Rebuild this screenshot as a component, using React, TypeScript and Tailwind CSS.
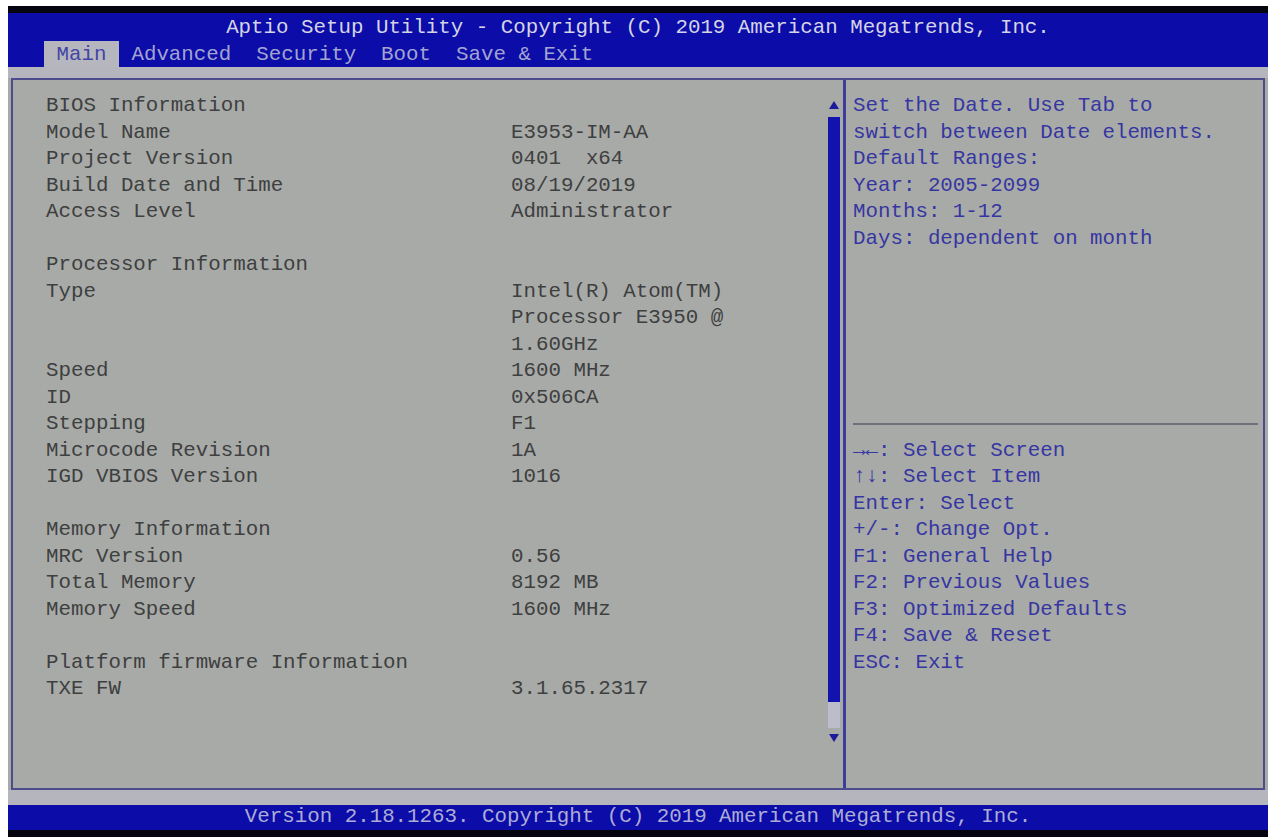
import React from "react";

type Row = { label?: string; value?: string; heading?: boolean };

const mainRows: Row[] = [
    { label: "BIOS Information", heading: true },
    { label: "Model Name", value: "E3953-IM-AA" },
    { label: "Project Version", value: "0401  x64" },
    { label: "Build Date and Time", value: "08/19/2019" },
    { label: "Access Level", value: "Administrator" },
    {},
    { label: "Processor Information", heading: true },
    { label: "Type", value: "Intel(R) Atom(TM)" },
    { value: "Processor E3950 @" },
    { value: "1.60GHz" },
    { label: "Speed", value: "1600 MHz" },
    { label: "ID", value: "0x506CA" },
    { label: "Stepping", value: "F1" },
    { label: "Microcode Revision", value: "1A" },
    { label: "IGD VBIOS Version", value: "1016" },
    {},
    { label: "Memory Information", heading: true },
    { label: "MRC Version", value: "0.56" },
    { label: "Total Memory", value: "8192 MB" },
    { label: "Memory Speed", value: "1600 MHz" },
    {},
    { label: "Platform firmware Information", heading: true },
    { label: "TXE FW", value: "3.1.65.2317" },
];

const helpLines = [
    "Set the Date. Use Tab to",
    "switch between Date elements.",
    "Default Ranges:",
    "Year: 2005-2099",
    "Months: 1-12",
    "Days: dependent on month",
];

const keyLines = [
    "→←: Select Screen",
    "↑↓: Select Item",
    "Enter: Select",
    "+/-: Change Opt.",
    "F1: General Help",
    "F2: Previous Values",
    "F3: Optimized Defaults",
    "F4: Save & Reset",
    "ESC: Exit",
];

const tabs = ["Main", "Advanced", "Security", "Boot", "Save & Exit"];

const TriangleUp = () => (
    <svg width="10" height="8" viewBox="0 0 10 8">
        <path d="M5 0L10 8H0Z" fill="#1a1a9a"/>
    </svg>
);

const TriangleDown = () => (
    <svg width="10" height="8" viewBox="0 0 10 8">
        <path d="M0 0H10L5 8Z" fill="#1a1a9a"/>
    </svg>
);

const App: React.FC = () => {
    return (
        <div className="w-[1268px] h-[837px] bg-white pt-[6px] pl-[8px] flex font-['Liberation_Mono','DejaVu_Sans_Mono',monospace] text-[20.8px] leading-[26.5px] whitespace-pre">
            <div className="flex-1 flex flex-col bg-[#a8aaa7]">
                <div className="h-[7px] bg-[#050510]"/>

                {/* title + menu tabs */}
                <div className="h-[54px] bg-[#0c0ca8] flex flex-col">
                    <div className="h-[28px] pt-[3px] flex items-center justify-center text-[#d4d4e6]">
                        Aptio Setup Utility - Copyright (C) 2019 American Megatrends, Inc.
                    </div>
                    <div className="h-[26px] flex pl-[36px]">
                        {tabs.map((t, i) => (
                            <div
                                key={t}
                                className={i === 0
                                    ? "px-[12.5px] pt-[2px] flex items-center bg-[#b6b7be] text-[#4444a6]"
                                    : "px-[12.5px] pt-[2px] flex items-center text-[#a2a4d0]"}
                            >
                                {t}
                            </div>
                        ))}
                    </div>
                </div>

                <div className="h-[11px] bg-[#b5b6bd]"/>

                {/* main panel */}
                <div className="h-[712px] ml-[3px] mr-[3px] border-2 border-[#4c4c8c] flex">
                    <div className="w-[830px] flex">
                        <div className="flex-1 pt-[13px] pl-[33px] text-[#3e3f40]">
                            {mainRows.map((r, i) => (
                                <div key={i} className="h-[26.5px] flex">
                                    <div className="w-[465px]">{r.label ?? ""}</div>
                                    <div>{r.value ?? ""}</div>
                                </div>
                            ))}
                        </div>
                        <div className="w-[12px] mr-[3px] pt-[21px] flex flex-col items-center">
                            <TriangleUp/>
                            <div className="mt-[8px] w-[12px] h-[585px] bg-[#1212ae]"/>
                            <div className="w-[12px] h-[26px] bg-[#bcbdca]"/>
                            <div className="mt-[6px]"><TriangleDown/></div>
                        </div>
                    </div>

                    <div className="w-[3px] bg-[#3c3c9a]"/>

                    <div className="flex-1 pt-[13px] pl-[7px] text-[#3636a2]">
                        <div className="h-[318px]">
                            {helpLines.map((l) => (
                                <div key={l} className="h-[26.5px]">{l}</div>
                            ))}
                        </div>
                        <div className="h-[26.5px] flex items-center pr-[5px]">
                            <div className="w-full h-[2px] bg-[#6f707c]"/>
                        </div>
                        {keyLines.map((l) => (
                            <div key={l} className="h-[26.5px]">{l}</div>
                        ))}
                    </div>
                </div>

                <div className="h-[15px] bg-[#b4b5bd]"/>

                {/* version footer */}
                <div className="h-[25px] bg-[#0c0ca8] flex items-center justify-center text-[#acacd6]">
                    Version 2.18.1263. Copyright (C) 2019 American Megatrends, Inc.
                </div>
                <div className="h-[7px] bg-[#050510]"/>
            </div>
        </div>
    );
};

export default App;
